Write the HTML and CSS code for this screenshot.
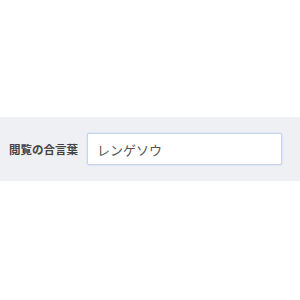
FILE: index.html
```html
<!DOCTYPE html>
<html lang="ja">
<head>
  <meta charset="UTF-8">
  <meta name="viewport" content="width=device-width, initial-scale=1.0">
  <title>閲覧の合言葉</title>
  <link rel="stylesheet" href="styles.css">
</head>
<body>
  <div class="password-row">
    <label class="password-label" for="passphrase">閲覧の合言葉</label>
    <input type="text" id="passphrase" class="password-input" value="レンゲソウ">
  </div>
</body>
</html>
```

FILE: styles.css
```css
body {
  margin: 0;
  font-family: "Liberation Sans", "Noto Sans CJK JP", sans-serif;
  background-color: #fff;
  color: #333;
}

.password-row {
  display: flex;
  align-items: center;
  margin-top: 117px;
  height: 64px;
  padding: 0 18px 0 9px;
  background-color: #eef0f3;
}

.password-label {
  width: 78px;
  font-size: 11.5px;
  font-weight: bold;
  color: #444;
  white-space: nowrap;
}

.password-input {
  box-sizing: border-box;
  width: 195px;
  height: 32px;
  padding: 0 9px;
  border: 1px solid #c5d3ee;
  border-radius: 2px;
  background-color: #fff;
  box-shadow: 0 0 2px rgba(120, 150, 220, 0.35);
  font-family: "Noto Sans CJK JP", sans-serif;
  font-size: 13px;
  color: #555;
  outline: none;
}
```
